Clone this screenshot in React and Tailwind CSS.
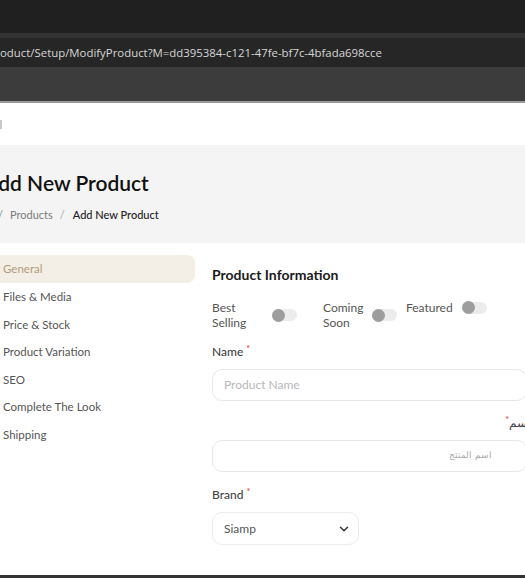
import { ChevronDown, Home } from 'lucide-react';

const font = { fontFamily: 'Lato, "Noto Sans", sans-serif' };

const menu = [
  'General',
  'Files & Media',
  'Price & Stock',
  'Product Variation',
  'SEO',
  'Complete The Look',
  'Shipping',
];

function Toggle() {
  return (
    <div className="relative flex items-center w-[25px] h-[13px] shrink-0">
      <div className="absolute inset-x-0 h-[12px] rounded-full bg-[#ececec]" />
      <div className="relative w-[13px] h-[13px] rounded-full bg-[#9d9d9d]" />
    </div>
  );
}

function Req() {
  return <span className="text-[#e5342f] text-[9px] align-top ml-[3px] leading-none">*</span>;
}

export default function App() {
  return (
    <div className="w-[525px] h-[578px] overflow-hidden bg-white flex flex-col" style={font}>
      {/* browser chrome */}
      <div className="h-[33px] bg-[#202020] shrink-0" />
      <div className="h-[5px] bg-[#333333] shrink-0" />
      <div
        className="h-[29px] bg-[#262626] shrink-0 flex items-center text-[11.4px] text-[#d6d6d6] whitespace-nowrap"
        style={{ fontFamily: '"Open Sans", "Noto Sans", sans-serif' }}
      >
        oduct/Setup/ModifyProduct?M=dd395384-c121-47fe-bf7c-4bfada698cce
      </div>
      <div className="h-[34px] bg-[#3c3c3c] shrink-0" />
      <div className="h-[2px] bg-[#9a9a9a] shrink-0" />

      {/* top nav strip */}
      <div className="h-[42px] bg-white shrink-0 flex items-center">
        <div className="w-[2px] h-[9px] bg-[#c8c8c8]" />
      </div>

      {/* page header */}
      <div className="h-[98px] bg-[#f4f4f4] shrink-0 pt-[25px] -ml-[16px] w-[560px]">
        <h1 className="text-[21px] leading-[26px] font-semibold text-[#111]">Add New Product</h1>
        <div className="mt-[11px] flex items-center text-[11px] leading-[16px] whitespace-nowrap">
          <Home size={11} className="text-[#777]" />
          <span className="text-[#888] ml-[3px]">/</span>
          <span className="text-[#7a7a7a] ml-[7px]">Products</span>
          <span className="text-[#aaa] ml-[7px]">/</span>
          <span className="text-[#222] font-medium ml-[8px]">Add New Product</span>
        </div>
      </div>

      {/* content */}
      <div className="flex pt-[12px] -ml-[20px] w-[560px]">
        <ul className="w-[215px] shrink-0 text-[11.5px]">
          {menu.map((m, i) => (
            <li
              key={m}
              className={
                i === 0
                  ? 'h-[28px] flex items-center pl-[23px] rounded-lg bg-[#f3efe6] text-[#b39b7a]'
                  : 'h-[27.5px] flex items-center pl-[23px] text-[#555]'
              }
            >
              {m}
            </li>
          ))}
        </ul>

        <div className="ml-[17px] w-[315px] shrink-0 pt-[10px]">
          <h2 className="text-[14px] leading-[20px] font-bold text-[#1a1a1a]">Product Information</h2>

          <div className="mt-[15px] flex items-start text-[12px] leading-[15px] text-[#555]">
            <div className="flex items-center">
              <span className="w-[60px]">Best<br />Selling</span>
              <Toggle />
            </div>
            <div className="flex items-center ml-[26px]">
              <span className="w-[49px]">Coming<br />Soon</span>
              <Toggle />
            </div>
            <div className="flex items-center ml-[9px]">
              <span className="w-[56px]">Featured</span>
              <Toggle />
            </div>
          </div>

          <label className="block mt-[14px] text-[12px] leading-[16px] font-medium text-[#444]">
            Name<Req />
          </label>
          <div className="mt-[9px] h-[32px] rounded-[10px] border border-[#e8e8e8] flex items-center px-[11px] text-[12px] text-[#b8b8b8]">
            Product Name
          </div>

          <label dir="rtl" className="block mt-[14px] text-[12px] leading-[16px] font-medium text-[#444] -mr-[3px]">
            اسم<Req />
          </label>
          <div
            dir="rtl"
            className="mt-[9px] h-[32px] rounded-[10px] border border-[#e8e8e8] flex items-center px-[34px] text-[9px] text-[#aaa]"
            style={{ fontFamily: '"DejaVu Serif", "Noto Sans", serif' }}
          >
            اسم المنتج
          </div>

          <label className="block mt-[15px] text-[12px] leading-[16px] font-medium text-[#444]">
            Brand<Req />
          </label>
          <div className="mt-[9px] h-[33px] w-[147px] rounded-[10px] border border-[#ececec] flex items-center justify-between pl-[11px] pr-[7px] text-[12px] text-[#555]">
            <span>Siamp</span>
            <ChevronDown size={14} strokeWidth={2.5} className="text-[#333]" />
          </div>
        </div>
      </div>

      <div className="flex-1" />
      <div className="h-[3px] bg-[#333] shrink-0" />
    </div>
  );
}
